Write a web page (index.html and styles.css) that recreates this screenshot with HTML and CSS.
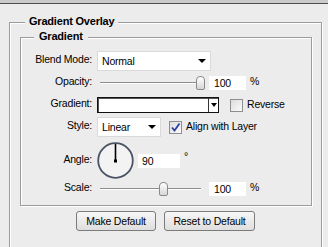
FILE: index.html
```html
<!DOCTYPE html>
<html>
<head>
<meta charset="utf-8">
<link rel="stylesheet" href="styles.css">
</head>
<body>
<div class="topbar"></div>
<div class="group outer">
  <div class="legend legend-outer">Gradient Overlay</div>
  <div class="group inner">
    <div class="legend legend-inner">Gradient</div>

    <div class="row row-blend">
      <span class="lbl">Blend Mode:</span>
      <div class="select select-blend"><span class="val">Normal</span><i class="arrow"></i></div>
    </div>

    <div class="row row-opacity">
      <span class="lbl">Opacity:</span>
      <div class="slider"><div class="track"></div><div class="thumb" style="left:99px"></div></div>
      <div class="num">100</div>
      <span class="unit">%</span>
    </div>

    <div class="row row-gradient">
      <span class="lbl">Gradient:</span>
      <div class="gradbox"><div class="gradfill"></div><div class="gradarrow"><i class="arrow"></i></div></div>
      <div class="check check-reverse"></div>
      <span class="checklabel">Reverse</span>
    </div>

    <div class="row row-style">
      <span class="lbl">Style:</span>
      <div class="select select-style"><span class="val">Linear</span><i class="arrow"></i></div>
      <div class="check check-align checked">
        <svg width="11" height="11" viewBox="0 0 11 11"><path d="M2 5.5 L4.5 8.5 L9.5 1.5" fill="none" stroke="#2b3f9e" stroke-width="1.8"/></svg>
      </div>
      <span class="checklabel">Align with Layer</span>
    </div>

    <div class="row row-angle">
      <span class="lbl">Angle:</span>
      <svg class="dial" width="37" height="37" viewBox="0 0 37 37">
        <circle cx="18.5" cy="18.5" r="17.3" fill="#f3f3f3" stroke="#4b5366" stroke-width="1.8"/>
        <line x1="18.5" y1="19" x2="18.5" y2="2" stroke="#000" stroke-width="1.6"/>
        <rect x="17" y="17.5" width="3" height="3" fill="#000"/>
      </svg>
      <div class="num num-angle">90</div>
      <span class="deg">°</span>
    </div>

    <div class="row row-scale">
      <span class="lbl">Scale:</span>
      <div class="slider"><div class="track"></div><div class="thumb" style="left:62px"></div></div>
      <div class="num">100</div>
      <span class="unit">%</span>
    </div>
  </div>

  <div class="buttons">
    <button class="btn btn-make">Make Default</button>
    <button class="btn btn-reset">Reset to Default</button>
  </div>
</div>
</body>
</html>
```

FILE: styles.css
```css
* { box-sizing: border-box; }
html, body { margin: 0; padding: 0; }
body {
  background: #ececec;
  font-family: "Liberation Sans", Arial, sans-serif;
  font-size: 10.5px;
  line-height: 13px;
  letter-spacing: -0.2px;
  color: #000;
  width: 328px;
  height: 247px;
  overflow: hidden;
}
.topbar {
  height: 4px;
  background: #cbcbcb;
  border-bottom: 1px solid #4e4e4e;
}
.group {
  border: 1px solid #9c9c9c;
  box-shadow: 1px 1px 0 #fff, inset 1px 1px 0 #fff;
}
.outer {
  margin: 18px 0 0 9px;
  width: 313px;
  padding-bottom: 40px;
}
.legend {
  width: fit-content;
  background: #ececec;
  font-weight: bold;
  font-size: 11px;
  margin-top: -8px;
  height: 13px;
}
.legend-outer { margin-left: 15px; padding: 0 4px; }
.legend-inner { margin-left: 13px; padding: 0 5px 0 5px; }
.inner {
  margin: 9px 9px 0 10px;
  padding-bottom: 9px;
}
.row {
  display: flex;
  align-items: center;
}
.lbl {
  width: 71px;
  text-align: right;
  margin-right: 5px;
  flex: none;
  margin-bottom: 3px;
}
.row-blend { margin-top: 8px; height: 20px; }
.row-opacity { margin-top: 5px; height: 14px; }
.row-gradient { margin-top: 7px; height: 16px; }
.row-style { margin-top: 4px; height: 20px; }
.row-angle { margin-top: 5px; height: 37px; }
.row-scale { margin-top: 3px; height: 14px; }

.select {
  height: 20px;
  background: #fff;
  border: 1px solid #dadada;
  display: flex;
  align-items: center;
  padding-left: 4px;
  flex: none;
}
.select .val { flex: 1; }
.select-blend { width: 114px; }
.select-style { width: 64px; }
.arrow {
  display: block;
  width: 0;
  height: 0;
  border-left: 4px solid transparent;
  border-right: 4px solid transparent;
  border-top: 4px solid #000;
  margin-right: 4px;
}
.slider {
  position: relative;
  width: 109px;
  height: 14px;
  flex: none;
}
.track {
  margin: 6px 0 0 3px;
  width: 101px;
  height: 2px;
  border-top: 1px solid #8c8c8c;
  border-bottom: 1px solid #fff;
}
.thumb {
  position: absolute;
  top: 0;
  width: 9px;
  height: 14px;
  border: 1px solid #8a8a8a;
  border-radius: 4px 4px 2px 2px;
  background: linear-gradient(#ffffff, #d6d6d6);
}
.num {
  width: 37px;
  height: 14px;
  background: #fff;
  padding-left: 5px;
  line-height: 14px;
  margin-left: 3px;
  flex: none;
}
.unit { margin-left: 4px; margin-bottom: 4px; }
.gradbox {
  width: 122px;
  height: 16px;
  border: 1px solid #111;
  box-shadow: inset 1px 1px 0 #555;
  background: #fff;
  display: flex;
  flex: none;
}
.gradfill { flex: 1; }
.gradarrow {
  width: 10px;
  border-left: 1px solid #333;
  display: flex;
  align-items: center;
  justify-content: center;
}
.gradarrow .arrow {
  margin: 0;
  border-left-width: 3px;
  border-right-width: 3px;
  border-top-width: 4px;
}
.check {
  width: 13px;
  height: 13px;
  border: 1px solid #8e8e8e;
  background: linear-gradient(135deg, #dcdcdc, #fbfbfb);
  flex: none;
  display: flex;
  align-items: center;
  justify-content: center;
}
.check-reverse { margin-left: 11px; }
.check-align { margin-left: 8px; }
.checklabel { margin-left: 4px; margin-bottom: 2px; }
.dial { display: block; flex: none; }
.num-angle { width: 42px; margin-left: 4px; padding-left: 4px; }
.deg { margin-left: 4px; margin-bottom: 8px; }

.buttons {
  display: flex;
  justify-content: center;
  gap: 8px;
  margin-top: 5px;
}
.btn {
  height: 20px;
  font-family: "Liberation Sans", Arial, sans-serif;
  font-size: 10.5px;
  letter-spacing: -0.2px;
  color: #000;
  border: 1px solid #7b7b7b;
  border-radius: 3px;
  background: linear-gradient(#f7f7f7, #dedede);
  padding: 0;
  line-height: 16px;
}
.btn-make { width: 80px; }
.btn-reset { width: 91px; }
```
